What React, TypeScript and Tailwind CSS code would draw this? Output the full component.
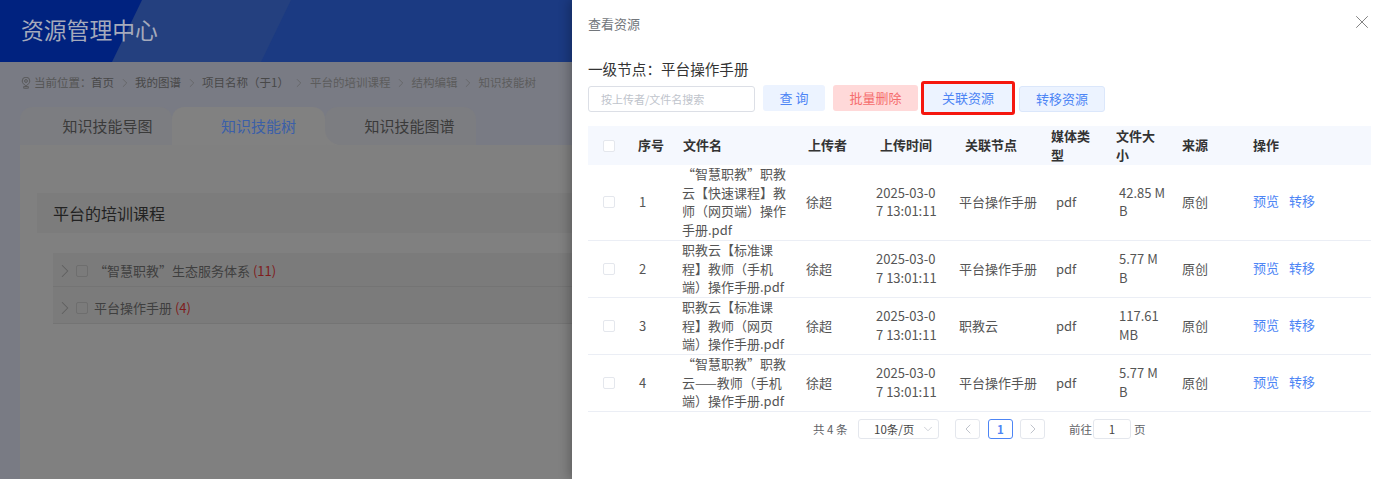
import { ChevronDown, ChevronLeft, ChevronRight, X } from "lucide-react"

const crumbs = ["首页", "我的图谱", "项目名称（于1）", "平台的培训课程", "结构编辑", "知识技能树"]

const rows = [
  { no: 1, name: "“智慧职教”职教云【快速课程】教师（网页端）操作手册.pdf", node: "平台操作手册", size: "42.85 MB" },
  { no: 2, name: "职教云【标准课程】教师（手机端）操作手册.pdf", node: "平台操作手册", size: "5.77 MB" },
  { no: 3, name: "职教云【标准课程】教师（网页端）操作手册.pdf", node: "职教云", size: "117.61 MB" },
  { no: 4, name: "“智慧职教”职教云——教师（手机端）操作手册.pdf", node: "平台操作手册", size: "5.77 MB" },
]

function Checkbox({ className = "" }: { className?: string }) {
  return <span className={`block h-3 w-3 shrink-0 rounded-[2px] border ${className}`} />
}

function PinIcon() {
  return (
    <svg className="h-[12px] w-[10px] text-[#555]" viewBox="0 0 10 12" fill="none" stroke="currentColor" strokeWidth="0.9">
      <path d="M5 9.2C3 7.4 1.2 5.9 1.2 4a3.8 3.8 0 0 1 7.6 0c0 1.9-1.8 3.4-3.8 5.2z" />
      <circle cx="5" cy="4" r="1.4" />
      <ellipse cx="5" cy="10.4" rx="3" ry="0.9" />
    </svg>
  )
}

function PageBehind() {
  return (
    <div className="h-full w-[572px] bg-[#797b84]">
      <div className="relative h-[62px] overflow-hidden bg-[#00227f]">
        <svg className="absolute inset-0 h-full w-full" viewBox="0 0 572 62" preserveAspectRatio="none">
          <polygon points="142,0 572,0 572,62 112,62" fill="#24407f" />
          <polygon points="291,0 572,0 572,62 261,62" fill="#1b3a82" />
        </svg>
        <div className="relative pl-[21px] pt-[13px] text-[22.8px] leading-[34px] text-[#a5aabb]">资源管理中心</div>
      </div>
      <div className="mb-[4px] flex h-[41px] items-center pl-[21px] text-[11.5px] text-[#484848]">
        <PinIcon />
        <span className="ml-[3px] w-[57px] whitespace-nowrap text-[#555]">当前位置：</span>
        {crumbs.map((c, i) => (
          <div key={c} className="flex items-center">
            <span className={i > 2 ? "text-[#5c5c5c]" : ""}>{c}</span>
            {i < crumbs.length - 1 && (
              <span className="flex w-[21px] justify-center">
                <ChevronRight className="h-[14px] w-[14px] text-[#5f5f5f]" strokeWidth={1.2} />
              </span>
            )}
          </div>
        ))}
      </div>
      <div className="flex h-[38px] pl-[20px] text-[15px]">
        <div className="flex w-[152px] items-center justify-center rounded-t-xl bg-[#7c7d81] pl-[23px] text-[#3a3a3a]">知识技能导图</div>
        <div className="flex w-[153px] items-center justify-center rounded-t-xl bg-[#818181] pl-[20px] text-[#3b5fa8]">知识技能树</div>
        <div className="w-[151px] bg-gradient-to-b from-transparent from-50% to-[#818181] to-50%">
          <div className="flex h-full items-center justify-center rounded-t-xl rounded-bl-2xl bg-[#7c7d81] pl-[18px] text-[#3a3a3a]">知识技能图谱</div>
        </div>
      </div>
      <div className="ml-[20px] h-[334px] bg-[#808080] pl-[17px] pt-[48px]">
        <div className="flex h-[40px] items-center bg-[#7c7c7c] pl-[16px] text-[16px] text-[#222]">平台的培训课程</div>
        <div className="ml-[16px] mt-[20px] text-[13px] text-[#3f3f3f]">
          <div className="flex h-[34px] items-center border-b border-[#747474] bg-[#7b7b7b] pt-[2px]">
            <ChevronRight className="ml-[1px] h-[22px] w-[22px] text-[#5f5f5f]" strokeWidth={1.1} />
            <Checkbox className="border-[#6e6e6e]" />
            <span className="ml-[6px]">“智慧职教”生态服务体系 <span className="text-[#7f1d1d]">(11)</span></span>
          </div>
          <div className="flex h-[37px] items-center border-b border-[#747474] bg-[#7b7b7b] pt-[5px]">
            <ChevronRight className="ml-[1px] h-[22px] w-[22px] text-[#5f5f5f]" strokeWidth={1.1} />
            <Checkbox className="border-[#6e6e6e]" />
            <span className="ml-[6px]">平台操作手册 <span className="text-[#7f1d1d]">(4)</span></span>
          </div>
        </div>
      </div>
    </div>
  )
}

function ResourceDrawer() {
  return (
    <div className="absolute right-0 top-0 h-full w-[813px] bg-white pl-[16px] pr-[14px] shadow-[-3px_0_10px_rgba(0,0,0,0.25)]">
      <div className="flex h-[48px] items-center justify-between text-[13px] text-[#72767b]">
        <span>查看资源</span>
        <X className="mb-[4px] mr-[-2px] h-[22px] w-[22px] text-[#777]" strokeWidth={1} />
      </div>
      <div className="mt-[10px] text-[14.6px] leading-[21px] text-[#333]">一级节点：平台操作手册</div>
      <div className="mt-[2px] flex h-[34px] items-center text-[13px]">
        <input
          readOnly
          placeholder="按上传者/文件名搜索"
          className="mt-[2px] h-[26px] w-[167px] rounded-[3px] border border-[#dcdfe6] px-[12px] text-[11px] outline-none placeholder:text-[#c0c4cc]"
        />
        <button className="ml-[8px] h-[26px] w-[62px] rounded-[3px] bg-[#ecf3ff] text-[#4d85f5]">查 询</button>
        <button className="ml-[8px] h-[26px] w-[85px] rounded-[3px] bg-[#ffd9d9] text-[#f56c6c]">批量删除</button>
        <div className="ml-[3px] h-[34px] w-[94px] rounded-[3px] border-[3px] border-[#f5170f] bg-[#ecf3ff]">
          <button className="h-full w-full text-[#4d85f5]">关联资源</button>
        </div>
        <button className="ml-[4px] mt-[2px] h-[26px] w-[86px] rounded-[3px] border border-[#dbe7fb] bg-[#ecf3ff] text-[#4d85f5]">转移资源</button>
      </div>

      <table className="mt-[11px] w-[783px] table-fixed text-[13px] leading-[18.7px] text-[#555]">
        <colgroup>
          <col className="w-[40px]" />
          <col className="w-[45px]" />
          <col className="w-[125px]" />
          <col className="w-[70px]" />
          <col className="w-[77px]" />
          <col className="w-[96px]" />
          <col className="w-[66px]" />
          <col className="w-[65px]" />
          <col className="w-[71px]" />
          <col className="w-[128px]" />
        </colgroup>
        <thead>
          <tr className="h-[39px] bg-[#f5f8fe] text-left font-bold text-[#333]">
            <th className="pl-[15px]"><Checkbox className="border-[#e4e7ed] bg-white" /></th>
            <th className="pl-[10px]">序号</th>
            <th className="pl-[10px]">文件名</th>
            <th className="pl-[10px]">上传者</th>
            <th className="pl-[12px]">上传时间</th>
            <th className="pl-[20px]">关联节点</th>
            <th className="px-[10px]">媒体类型</th>
            <th className="pl-[9px] pr-[11px]">文件大小</th>
            <th className="pl-[10px]">来源</th>
            <th className="pl-[10px]">操作</th>
          </tr>
        </thead>
        <tbody>
          {rows.map((r) => (
            <tr key={r.no} className="border-b border-[#ebeef5]">
              <td className="pl-[15px]"><Checkbox className="border-[#e4e7ed]" /></td>
              <td className="pl-[11px]">{r.no}</td>
              <td className="break-all pl-[9px] pr-[11px]">{r.name}</td>
              <td className="pl-[8px]">徐超</td>
              <td className="break-all pl-[8px] pr-[4px]">2025-03-07 13:01:11</td>
              <td className="pl-[14px]">{r.node}</td>
              <td className="pl-[15px]">pdf</td>
              <td className="break-all pl-[12px] pr-[7px]">{r.size}</td>
              <td className="pl-[10px]">原创</td>
              <td className="pl-[10px] pb-[2px] text-[#4d85f5]">
                <span className="mr-[10px]">预览</span>
                <span>转移</span>
              </td>
            </tr>
          ))}
        </tbody>
      </table>

      <div className="mt-[7px] flex h-[20px] items-center text-[11.5px] text-[#606266]">
        <span className="ml-[225px] w-[45px] whitespace-nowrap">共 4 条</span>
        <div className="flex h-[20px] w-[81px] items-center justify-between rounded-[3px] border border-[#e4e7ed] pl-[15px] pr-[3px] text-[#444]">
          10条/页
          <ChevronDown className="h-[14px] w-[14px] text-[#c0c4cc]" strokeWidth={1.3} />
        </div>
        <div className="ml-[16px] flex h-[20px] w-[25px] items-center justify-center rounded-[3px] border border-[#e4e7ed]">
          <ChevronLeft className="h-4 w-4 text-[#c0c4cc]" strokeWidth={1.5} />
        </div>
        <div className="ml-[8px] flex h-[20px] w-[25px] items-center justify-center rounded-[3px] border border-[#4d85f5] font-bold text-[#4d85f5]">1</div>
        <div className="ml-[7px] flex h-[20px] w-[25px] items-center justify-center rounded-[3px] border border-[#e4e7ed]">
          <ChevronRight className="h-4 w-4 text-[#c0c4cc]" strokeWidth={1.5} />
        </div>
        <span className="ml-[24px] w-[24px] whitespace-nowrap">前往</span>
        <div className="flex h-[20px] w-[38px] items-center justify-center rounded-[3px] border border-[#e4e7ed] text-[#444]">1</div>
        <span className="ml-[3px]">页</span>
      </div>
    </div>
  )
}

export default function App() {
  return (
    <div className="relative h-[479px] w-full overflow-hidden font-['Noto_Sans_CJK_SC','Noto_Sans',sans-serif]">
      <PageBehind />
      <ResourceDrawer />
    </div>
  )
}
